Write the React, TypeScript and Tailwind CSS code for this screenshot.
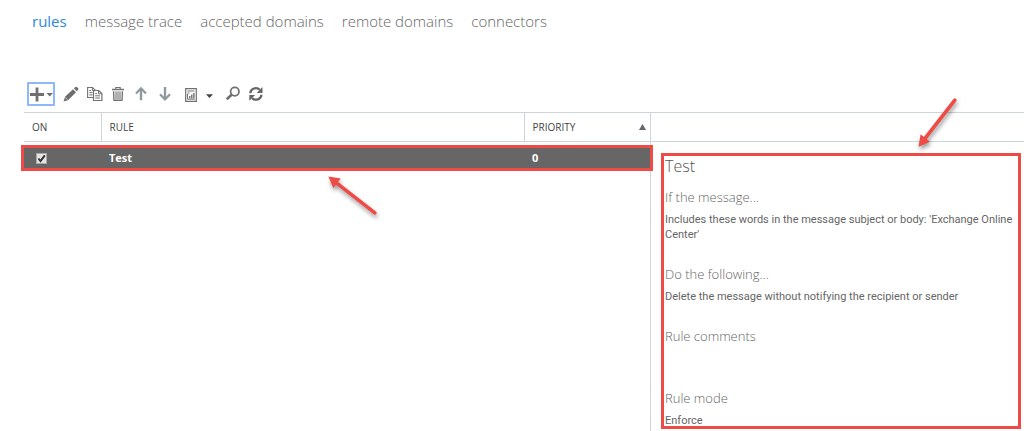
import type { ReactNode } from "react";

const tabs = ["rules", "message trace", "accepted domains", "remote domains", "connectors"];

function ToolButton({ label, className, children }: { label: string; className: string; children: ReactNode }) {
  return (
    <button type="button" aria-label={label} className={`flex h-6 shrink-0 items-center justify-center ${className}`}>
      {children}
    </button>
  );
}

function Toolbar() {
  return (
    <div role="toolbar" aria-label="Rule actions" className="flex items-center pl-[27px] text-[#6a6a6a] [&_svg]:shrink-0">
      <ToolButton label="New rule" className="w-7 rounded-[1px] border-2 border-[#8fb8f6]">
        <svg width="24" height="20" viewBox="0 0 24 20">
          <path d="M1 10.5H15M8 3.5V17.5" stroke="#707070" strokeWidth="2.8" fill="none" />
          <path d="M17.5 9H24L20.7 12.5Z" fill="#707070" />
        </svg>
      </ToolButton>
      <ToolButton label="Edit" className="ml-2 w-4">
        <svg width="16" height="16" viewBox="0 0 16 16">
          <path d="M0.5 15.5L2 10.8L10 3.2L13 6.3L5 14.2Z" fill="#6e6e6e" />
          <path d="M11 2.4L12.3 1.1Q13.2 0.3 14.1 1.2L15 2.1Q15.8 3 15 3.9L13.8 5.2Z" fill="#6e6e6e" />
          <path d="M2.2 11.5L4.5 13.7" stroke="#fff" strokeWidth="0.7" />
        </svg>
      </ToolButton>
      <ToolButton label="Copy" className="ml-2 w-[15px]">
        <svg width="16" height="16" viewBox="0 0 16 16" fill="#fff" stroke="#737373">
          <path d="M0.6 1.5H5.5L8.3 4.2V11.5H0.6Z" strokeWidth="1.1" />
          <path d="M5.4 1.7V4.4H8M2.3 4.5H4M2.3 6.7H5.5M2.3 8.9H5.5" fill="none" />
          <path d="M6.5 4.5H11.7L14.9 7.6V14.5H6.5Z" strokeWidth="1.2" />
          <path d="M11.5 4.7V7.8H14.7M8.2 7.6H10M8.2 9.8H13M8.2 12H13" fill="none" />
        </svg>
      </ToolButton>
      <ToolButton label="Delete" className="ml-2 w-[15px]">
        <svg width="14" height="16" viewBox="0 0 14 16" fill="none" stroke="#737373">
          <path d="M1 3.5H13" strokeWidth="1.5" />
          <path d="M4.8 3V1.5H9.2V3" strokeWidth="1.1" />
          <path d="M2.5 5.2L2.9 14.3H11.1L11.5 5.2" strokeWidth="1.2" fill="#e4e4e4" />
          <path d="M5 5.5V13.5M7 5.5V13.5M9 5.5V13.5" strokeWidth="0.9" />
        </svg>
      </ToolButton>
      <ToolButton label="Move up" className="ml-2 w-4">
        <svg width="12" height="16" viewBox="0 0 12 16" fill="none" stroke="#8d999c">
          <path d="M6 14.3V3" strokeWidth="2.4" />
          <path d="M1 7.5L6 2.3L11 7.5" strokeWidth="2.2" />
        </svg>
      </ToolButton>
      <ToolButton label="Move down" className="ml-2 w-[15px]">
        <svg width="12" height="16" viewBox="0 0 12 16" fill="none" stroke="#8d999c">
          <path d="M6 1V13" strokeWidth="2.4" />
          <path d="M1 8.3L6 13.5L11 8.3" strokeWidth="2.2" />
        </svg>
      </ToolButton>
      <ToolButton label="Reports" className="ml-[13px] w-7">
        <svg width="28" height="16" viewBox="0 0 28 16" fill="none" stroke="#707070">
          <path d="M0.7 2.7H11.3V15.3H0.7Z" strokeWidth="1.2" />
          <path d="M2.5 5H9.5M2.5 7H4.5M2.5 8V13.2H9.7" />
          <path d="M4.8 12.5V10M6.8 12.5V8.5M8.9 12.5V7" strokeWidth="1.4" />
          <path d="M21 8.3H28L24.5 12Z" fill="#444" stroke="none" />
        </svg>
      </ToolButton>
      <ToolButton label="Search" className="ml-3 w-[15px]">
        <svg width="16" height="16" viewBox="0 0 16 16" fill="none" stroke="#6e6e6e">
          <circle cx="9.8" cy="5.6" r="4.2" strokeWidth="1.7" />
          <path d="M6.6 8.8L1.7 13.2" strokeWidth="2.6" />
        </svg>
      </ToolButton>
      <ToolButton label="Refresh" className="ml-2 w-4">
        <svg width="16" height="16" viewBox="0 0 16 16" fill="none" stroke="#666">
          <path d="M2.3 7.2A5.5 5.2 0 0 1 11.8 3.8" strokeWidth="2.3" />
          <path d="M14.5 1V6.9H8.7Z" fill="#666" stroke="none" />
          <path d="M13.4 8.7A5.5 5.2 0 0 1 4 12.1" strokeWidth="2.3" />
          <path d="M1.3 14.8V9H7.1Z" fill="#666" stroke="none" />
        </svg>
      </ToolButton>
    </div>
  );
}

function RulesTable() {
  return (
    <table className="w-full table-fixed border-collapse text-left text-[11px] leading-4">
      <colgroup>
        <col className="w-[77px]" />
        <col />
        <col className="w-[126px]" />
      </colgroup>
      <thead className="text-[10px] text-[#444]">
        <tr className="h-[29px] border-y border-[#ced5d8]">
          <th scope="col" className="px-2 py-0 font-normal">ON</th>
          <th scope="col" className="border-l border-[#ced5d8] px-2 py-0 font-normal">RULE</th>
          <th scope="col" className="border-l border-[#ced5d8] py-0 pr-1 pl-2 font-normal" aria-sort="ascending">
            <span className="flex items-center justify-between">
              PRIORITY
              <svg width="7" height="6" viewBox="0 0 7 6" className="shrink-0">
                <path d="M0 6H7L3.5 0Z" fill="#666" />
              </svg>
            </span>
          </th>
        </tr>
      </thead>
      <tbody className="font-bold text-white before:block before:h-[6px]">
        <tr className="h-5 bg-[#666] outline-3 outline-[#ee4b47]">
          <td className="px-3">
            <input
              type="checkbox"
              defaultChecked
              aria-label="Test enabled"
              className="block size-[11px] appearance-none border border-[#aaa] bg-[#e4e4e4] bg-[url('data:image/svg+xml,%3Csvg%20xmlns=%22http://www.w3.org/2000/svg%22%20viewBox=%220%200%209%209%22%3E%3Cpath%20d=%22M1.5%204.5L3.5%207L7.8%201.3%22%20fill=%22none%22%20stroke=%22%23333%22%20stroke-width=%222%22/%3E%3C/svg%3E')]"
            />
          </td>
          <td className="px-2">Test</td>
          <td className="px-2">0</td>
        </tr>
      </tbody>
    </table>
  );
}

function Section({ title, className, children }: { title: string; className: string; children?: ReactNode }) {
  return (
    <section className={className}>
      <h3 className="text-[13px] leading-5 font-light text-[#666]">{title}</h3>
      <p className="mt-[5px] min-h-[15px] font-[Roboto,'Open_Sans',sans-serif] text-[11px] leading-[15px] text-[#666]">{children}</p>
    </section>
  );
}

function Arrow({ className, tail, angle }: { className: string; tail: number; angle: number }) {
  return (
    <svg width="60" height="60" viewBox="-30 -30 60 60" className={`pointer-events-none absolute z-20 drop-shadow-[1px_3px_2px_rgba(0,0,0,0.4)] ${className}`}>
      <g transform={`rotate(${angle})`} fill="#ee4b47">
        <path d="M-30 0L-19 -6V6Z" />
        <path d={`M-21 0H${tail}`} stroke="#ee4b47" strokeWidth="3.6" strokeLinecap="round" />
      </g>
    </svg>
  );
}

export default function App() {
  return (
    <main className="flex min-h-screen flex-col overflow-x-hidden bg-white pt-[7px] font-['Open_Sans','Noto_Sans',sans-serif] text-[#555]">
      <nav className="flex gap-[18px] pl-8 text-[15px] leading-7">
        {tabs.map((tab, i) => (
          <a key={tab} href="#" className={i === 0 ? "text-[#2b88d8]" : "font-light text-[#666]"}>
            {tab}
          </a>
        ))}
      </nav>
      <div className="mt-[47px]">
        <Toolbar />
      </div>
      <div className="mt-[6px] grid grow grid-cols-[626fr_374fr] pl-6">
        <div className="relative z-10">
          <RulesTable />
          <Arrow className="top-[53px] left-[298px]" tail={29} angle={38} />
        </div>
        <aside className="relative border-l border-[#ced5d8]">
          <div className="h-[30px] border-y border-[#ced5d8]" />
          <div className="mt-[11px] mr-[3px] ml-[10px] border-3 border-[#ee4b47] px-px">
            <h2 className="text-[16px] leading-5 font-light text-[#555]">Test</h2>
            <Section title="If the message..." className="mt-[11px]">
              Includes these words in the message subject or body: 'Exchange Online Center'
            </Section>
            <Section title="Do the following..." className="mt-[22px]">
              Delete the message without notifying the recipient or sender
            </Section>
            <Section title="Rule comments" className="mt-[22px]" />
            <Section title="Rule mode" className="mt-[22px] -mb-0.5">
              Enforce
            </Section>
          </div>
          <Arrow className="top-[-19px] right-[57px]" tail={29} angle={-52} />
        </aside>
      </div>
    </main>
  );
}
